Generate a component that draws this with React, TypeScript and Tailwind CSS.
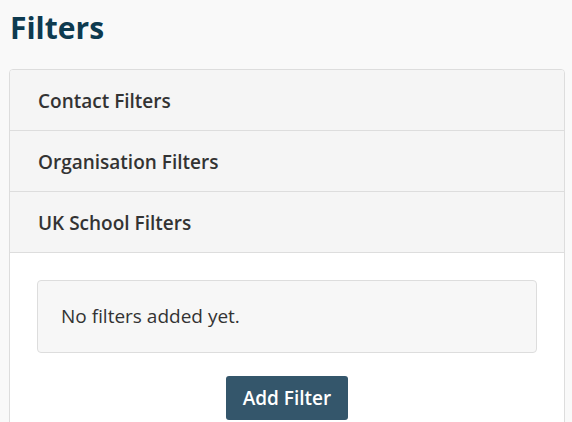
const sections = ["Contact Filters", "Organisation Filters", "UK School Filters"];

export default function App() {
  return (
    <div className="min-h-screen bg-[#f9f9f9] font-['Open_Sans',sans-serif]">
      <h1 className="pl-[10px] pt-[8px] text-[30px] font-bold leading-[40px] text-[#0d3a4f]">Filters</h1>

      <div className="ml-[9px] mt-[21px] w-[556px] overflow-hidden rounded-[4px] border border-[#dddddd] bg-white">
        {sections.map((s) => (
          <div
            key={s}
            className="flex h-[61px] items-center border-b border-[#dddddd] bg-[#f5f5f5] pl-[28px] pt-[2px] text-[19px] font-semibold text-[#333333]"
          >
            {s}
          </div>
        ))}

        <div className="px-[27px] pt-[27px] pb-[20px]">
          <div className="flex h-[73px] items-center rounded-[4px] border border-[#dddddd] bg-[#f7f7f7] pl-[23px] text-[19px] text-[#333333]">
            No filters added yet.
          </div>
          <div className="mt-[23px] flex justify-center">
            <button className="h-[44px] w-[122px] rounded-[3px] bg-[#34566b] text-[19px] font-semibold text-white">
              Add Filter
            </button>
          </div>
        </div>
      </div>
    </div>
  );
}
